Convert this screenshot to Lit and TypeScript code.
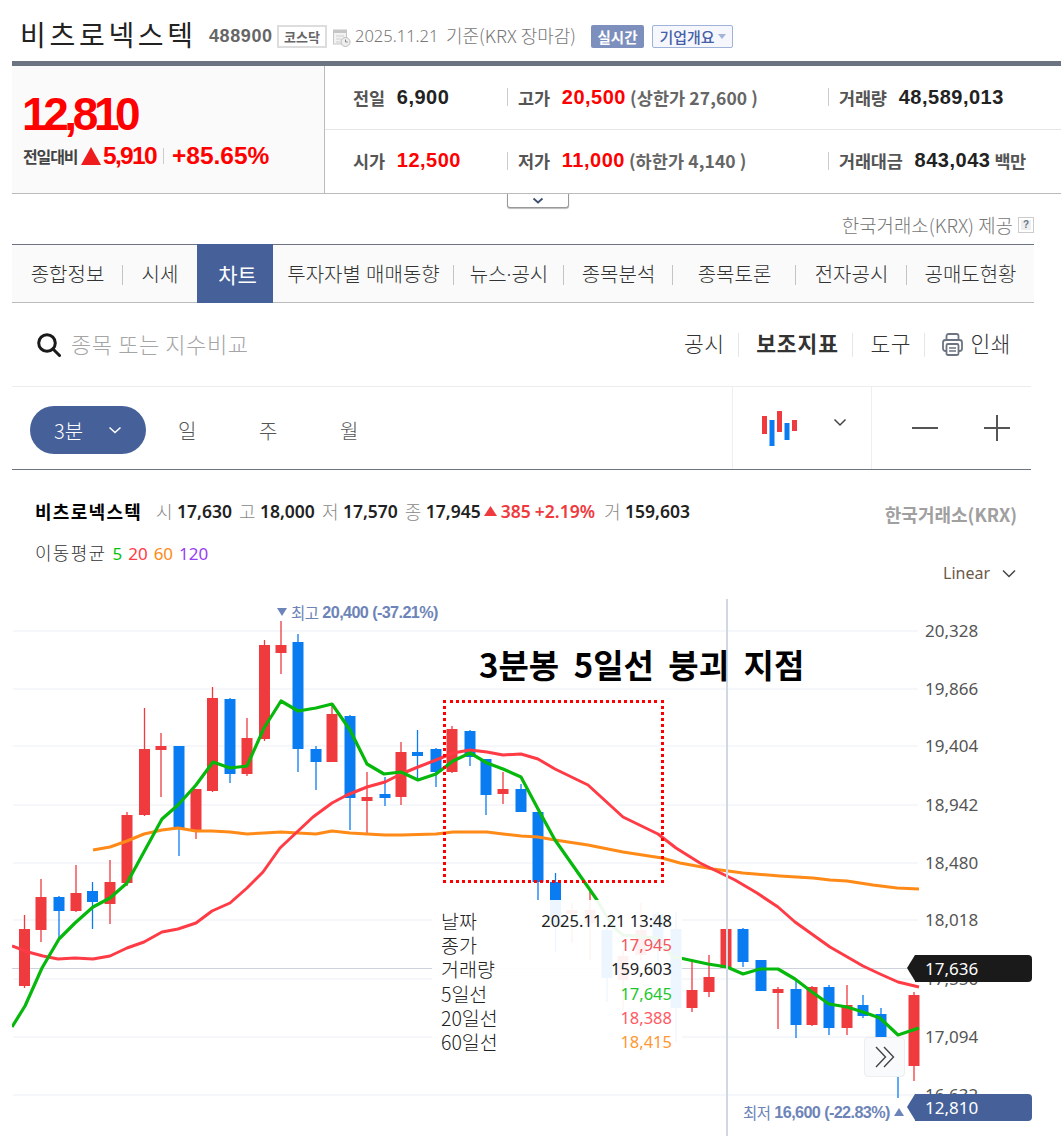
import { LitElement, html, css, svg } from "lit";
import { customElement } from "lit/decorators.js";

type C = [number, number, number, number, number, "r" | "b"];
const candles: C[] = [
  [24.5, 915, 988, 929, 986, "r"], [41, 879, 942, 897, 930, "r"], [59, 896, 940, 897, 911, "b"],
  [76, 865, 912, 893, 911, "r"], [92.5, 882, 929, 891, 902, "b"], [110, 860, 924, 882, 904, "r"],
  [127, 812, 886, 815, 883, "r"], [144.5, 708, 816, 749, 815, "r"], [161, 733, 797, 746, 750, "r"],
  [179, 746, 856, 746, 828, "b"], [196, 789, 839, 789, 830, "r"], [212.5, 687, 792, 698, 791, "r"],
  [230, 698, 783, 699, 774, "b"], [247, 718, 776, 738, 774, "r"], [264.5, 640, 741, 645, 739, "r"],
  [281, 621, 674, 645, 653, "r"], [298, 634, 772, 642, 749, "b"], [316, 746, 790, 749, 762, "b"],
  [332, 703, 762, 714, 762, "r"], [350, 715, 830, 716, 798, "b"], [367, 772, 833, 797, 801, "r"],
  [385, 777, 806, 794, 798, "b"], [401, 742, 805, 752, 797, "r"], [417.5, 730, 778, 752, 756, "b"],
  [436, 748, 787, 749, 772, "b"], [452, 726, 773, 729, 772, "r"], [470, 730, 766, 731, 757, "b"],
  [486, 759, 815, 759, 795, "b"], [503, 772, 804, 789, 794, "r"], [521, 784, 812, 789, 812, "b"],
  [538, 812, 900, 812, 882, "b"], [555.5, 873, 952, 882, 925, "b"], [572, 903, 943, 910, 914, "r"],
  [590, 890, 960, 910, 923, "r"], [607, 925, 1002, 930, 978, "b"], [623, 950, 1010, 956, 980, "r"],
  [641, 903, 960, 930, 955, "r"], [658, 912, 970, 914, 945, "b"], [676, 912, 1042, 929, 1008, "b"],
  [692, 962, 1012, 990, 1008, "r"], [709, 955, 997, 977, 992, "r"], [726, 929, 968, 929, 968, "r"],
  [743, 928, 967, 929, 962, "b"], [761, 960, 991, 960, 991, "b"], [778, 987, 1029, 989, 993, "r"],
  [796, 980, 1038, 989, 1025, "b"], [812, 986, 1026, 987, 1025, "r"], [829, 985, 1035, 987, 1028, "b"],
  [847, 985, 1035, 1005, 1028, "r"], [863, 995, 1018, 1005, 1016, "b"], [881, 1008, 1045, 1014, 1037, "b"],
  [898, 1040, 1098, 1040, 1076, "b"], [914, 992, 1081, 995, 1066, "r"],
];
const green = "12,1027 25,1006 42,968 59,939 75,923 93,907 110,898 127,883 145,850 162,819 178,805 196,785 213,762 230,768 247,766 264,728 281,701 298,711 316,708 332,704 350,730 367,764 384,774 401,772 418,780 436,774 453,761 470,753 487,763 503,769 521,777 538,809 555,840 588,887 597,900 613,927 623,935 657,938 673,957 680,958 708,964 727,967 743,974 760,969 778,969 795,979 812,992 829,1004 847,1007 863,1012 880,1018 898,1035 919,1028";
const red = "12,946 28,952 43,956 58,959 75,958 93,959 110,956 127,948 144,942 162,932 178,929 196,923 212,911 230,903 247,888 263,872 280,848 297,832 313,817 332,803 347,795 367,787 385,782 401,774 418,767 436,760 453,753 470,750 487,752 503,755 521,754 538,759 555,769 588,785 623,817 658,834 676,848 700,863 735,880 757,893 778,907 795,922 830,947 863,966 880,974 898,982 919,987";
const orange = "93,850 110,847 127,841 144,834 162,830 178,828 196,831 212,831 230,832 247,834 264,833 281,832 298,833 316,834 332,831 350,833 367,834 385,835 401,835 436,834 453,832 470,832 487,832 503,834 521,836 538,837 555,840 588,845 623,852 662,858 680,863 713,869 743,873 780,876 813,878 830,880 847,881 873,885 897,888 919,889";
const axis: [string, number][] = [["20,328", 631], ["19,866", 689], ["19,404", 746], ["18,942", 805], ["18,480", 863], ["18,018", 920], ["17,556", 979], ["17,094", 1037], ["16,632", 1095]];
const tabs = ["종합정보", "시세", "차트", "투자자별 매매동향", "뉴스·공시", "종목분석", "종목토론", "전자공시", "공매도현황"];
const tipRows: [string, string, string][] = [
  ["날짜", "2025.11.21 13:48", "t0"], ["종가", "17,945", "t1"], ["거래량", "159,603", "t0"],
  ["5일선", "17,645", "t2"], ["20일선", "18,388", "t3"], ["60일선", "18,415", "t4"],
];

@customElement("app-root")
export class AppRoot extends LitElement {
  static styles = css`
    :host { display: block; width: 1061px; height: 1136px; overflow: hidden; position: relative; background: #fff;
      font-family: "Noto Sans", "Noto Sans CJK KR", sans-serif; color: #333; }
    * { box-sizing: border-box; }

    .head { height: 61px; margin-left: 12px; padding: 12px 0 0 8px; display: flex; align-items: center; }
    .title { font-family: "Noto Sans CJK KR", sans-serif; font-size: 28px; letter-spacing: 3.7px; color: #222; width: 189px; white-space: nowrap; margin-top: -6px; }
    .code { font: bold 18px "Liberation Sans", sans-serif; letter-spacing: .6px; color: #666; width: 68px; }
    .badge { height: 23px; display: flex; align-items: center; justify-content: center; font: bold 13px "Noto Sans CJK KR", sans-serif; }
    .kosdaq { width: 50px; border: 2px solid #ddd; color: #666; margin-right: 6px; }
    .cal { width: 18px; height: 18px; margin: 2px 4px 0 0; }
    .date { font: 300 16.5px "Noto Sans", sans-serif; color: #777; width: 91px; white-space: nowrap; margin-top: -3px; }
    .base { font: 300 18px "Noto Sans CJK KR", sans-serif; color: #777; width: 145px; white-space: nowrap; margin-top: -3px; }
    .real { width: 53px; background: #7d8fbd; color: #fff; border-radius: 2px; margin-right: 8px; font-size: 14.5px; }
    .corp { width: 81px; border: 1px solid #9fb2d8; background: #f5f7fd; color: #4560a8; gap: 3px; border-radius: 2px; font-size: 15px; font-weight: 500; }
    .corp i { width: 0; height: 0; border: 4px solid transparent; border-top: 5px solid #a4b4d4; border-bottom: 0; }

    .bar { height: 5px; margin-left: 12px; background: #6b7480; }
    .summary { height: 128px; margin-left: 12px; display: flex; border-bottom: 1px solid #bbb; }
    .now { width: 313px; background: #fafafa; border-right: 1px solid #bbb; padding: 22px 0 0 10px; }
    .big { font: bold 46px/52px "Liberation Sans", sans-serif; letter-spacing: -4.4px; color: #f00; }
    .diff { display: flex; align-items: center; height: 26px; margin-top: 3px; color: #f00; font: bold 24.5px "Liberation Sans", sans-serif; }
    .diff .lab { font: bold 16px "Noto Sans CJK KR", sans-serif; letter-spacing: -1.1px; color: #444; width: 58px; margin-left: 1px; white-space: nowrap; }
    .diff .up { width: 0; height: 0; border: 10px solid transparent; border-top: 0; border-bottom: 18px solid #ee1c1c; margin-right: 2px; }
    .diff .amt { letter-spacing: -1.7px; width: 60px; }
    .diff .sep { width: 1px; height: 16px; background: #ccc; margin-right: 8px; }
    .cells { flex: 1; display: flex; flex-direction: column; padding-bottom: 1px; }
    .row { flex: 1; display: grid; grid-template-columns: 154px 321px 1fr; align-items: center; padding-left: 28px; }
    .row + .row { border-top: 1px solid #e6e6e6; }
    .cell { display: flex; align-items: center; white-space: nowrap; height: 100%; }
    .cell + .cell { position: relative; padding-left: 11px; }
    .cell + .cell::before { content: ""; position: absolute; left: 0; top: 50%; margin-top: -9px; width: 1px; height: 18px; background: #ccc; }
    .lb { font: bold 17.5px "Noto Sans CJK KR", sans-serif; color: #555; letter-spacing: -.2px; margin-right: 12px; }
    .val { font: bold 20px "Liberation Sans", sans-serif; letter-spacing: .5px; color: #222; }
    .val.red { color: #f00; }
    .lim { font: bold 17.5px "Noto Sans CJK KR", sans-serif; color: #666; margin-left: 4px; letter-spacing: .1px; }
    .unit { font: bold 17.5px "Noto Sans CJK KR", sans-serif; color: #555; margin-left: 4px; letter-spacing: -.5px; }
    .fold { position: absolute; left: 507px; top: 194px; width: 62px; height: 14px; background: #fff; border: 1px solid #999; border-top: 0; border-radius: 0 0 3px 3px; box-shadow: 0 1px 1px #bbb; display: flex; justify-content: center; align-items: center; }

    .prov { height: 50px; margin-left: 12px; width: 1022px; display: flex; justify-content: flex-end; align-items: flex-end; padding-bottom: 6px; gap: 5px; font: 300 18.9px "Noto Sans CJK KR", sans-serif; color: #777; }
    .q { width: 16px; height: 16px; margin-bottom: 5px; background: #eee; border: 1px solid #ccc; outline: 2px solid #fff; outline-offset: -3px; color: #678; font: bold 10px/14px "Liberation Sans", sans-serif; text-align: center; }

    .tabs { margin-left: 12px; width: 1022px; height: 59px; display: grid; grid-template-columns: 111px 74px 76px 181px 110px 109px 123px 111px 127px; background: #fafafa; border-top: 1px solid #6b7480; border-bottom: 1px solid #bbb; font: 300 20px "Noto Sans", "Noto Sans CJK KR", sans-serif; color: #333; }
    .tab { display: flex; align-items: center; justify-content: center; position: relative; white-space: nowrap; }
    .tab.sep::after { content: ""; position: absolute; right: 0; top: 20px; height: 20px; width: 1px; background: #c4c4c4; }
    .tab.on { background: #466199; color: #fff; font-weight: 400; font-size: 21px; margin: -1px 0 -1px; padding-left: 5px; }

    .tools { margin-left: 12px; width: 1019px; height: 84px; display: flex; align-items: center; border-bottom: 1px solid #ececec; padding-left: 25px; }
    .ph { margin: -4px 0 0 10px; font: 300 22px "Noto Sans CJK KR", sans-serif; color: #a5a5a5; letter-spacing: .6px; flex: 1; white-space: nowrap; }
    .act { font: 300 21.5px "Noto Sans CJK KR", sans-serif; letter-spacing: .5px; color: #333; display: flex; align-items: center; height: 24px; padding-bottom: 4px; white-space: nowrap; }
    .act b { font-weight: 700; font-size: 21.5px; letter-spacing: .9px; }
    .act + .act { border-left: 1px solid #e6e6e6; margin-left: 13.5px; padding-left: 17px; }
    .act svg { margin: 4px 7px 0 0; }
    .tools .end { width: 20px; flex: none; }

    .period { margin-left: 12px; width: 1019px; height: 83px; display: flex; border-bottom: 1px solid #6b7480; }
    .pleft { flex: 1; display: flex; align-items: center; padding: 4px 0 0 18px; font: 300 20px "Noto Sans CJK KR", sans-serif; color: #555; }
    .pill { width: 116px; height: 48px; border-radius: 24px; background: #466199; color: #fff; display: flex; align-items: center; padding-left: 24px; gap: 25px; margin-right: 32px; }
    .per { width: 81px; }
    .ctype { width: 140px; border-left: 1px solid #edf0f3; border-right: 1px solid #edf0f3; display: flex; align-items: center; padding-left: 29px; gap: 35px; }
    .zoom { width: 159px; display: flex; align-items: center; gap: 46px; padding: 0 0 0 40px; }

    .legend { margin-left: 12px; height: 120px; position: relative; }
    .info { display: flex; align-items: center; height: 22px; position: absolute; left: 23px; top: 30px; white-space: nowrap; font: 17px "Noto Sans", sans-serif; }
    .info .nm { font: 700 18px "Noto Sans CJK KR", sans-serif; letter-spacing: 1.3px; color: #000; width: 121px; }
    .info span.k { font: 300 18px "Noto Sans CJK KR", sans-serif; color: #888; width: 21px; }
    .info b { font-weight: 600; font-size: 17.5px; color: #222; margin-right: 7px; }
    .info .hot { color: #ef3a3e; font-weight: 600; font-size: 17.5px; }
    .krx { position: absolute; right: 44px; top: 31px; font: bold 18px "Noto Sans CJK KR", sans-serif; color: #a0a0a0; white-space: nowrap; }
    .ma { position: absolute; left: 23px; top: 69px; font: 300 18px "Noto Sans CJK KR", sans-serif; letter-spacing: 1.3px; display: flex; gap: 6px; color: #333; align-items: baseline; }
    .ma i { font: 400 17px "Noto Sans", sans-serif; letter-spacing: 0; }
    .linear { position: absolute; left: 931px; top: 92px; font-size: 16px; color: #6b5a4a; display: flex; align-items: center; gap: 12px; }

    .chart { margin-left: 12px; position: relative; width: 1049px; height: 546px; overflow: hidden; }
    .chart > svg { display: block; }
    .box { position: absolute; left: 431px; top: 110px; width: 221px; height: 183px; border: 3px dotted #f00; }
    .note { position: absolute; left: 467px; top: 50px; font: 700 33px "Noto Sans CJK KR", sans-serif; color: #000; word-spacing: 7px; white-space: nowrap; }
    .mark { position: absolute; font: 15.5px "Noto Sans CJK KR", sans-serif; color: #6d84b8; white-space: nowrap; letter-spacing: -.6px; display: flex; align-items: center; gap: 4px; }
    .mark b { font: bold 16.200px "Liberation Sans", sans-serif; }
    .mark i { width: 0; height: 0; border: 5px solid transparent; }
    .mark i.dn { border-top: 8px solid #6d84b8; border-bottom: 0; }
    .mark i.up { border-bottom: 8px solid #6d84b8; border-top: 0; }
    .hi { left: 265px; top: 11px; }
    .lo { left: 731px; top: 511px; }
    .tip { position: absolute; left: 420px; top: 310px; width: 250px; height: 152px; background: rgba(255,255,255,.93); padding: 9px 10px 0 9px; font-size: 16.500px; line-height: 24.2px; color: #222; }
    .tip div { display: flex; justify-content: space-between; white-space: pre; height: 24.2px; }
    .tip .l { font: 300 19.500px/24.2px "Noto Sans CJK KR", "Noto Sans", sans-serif; }
    .t0 { color: #222; } .t1 { color: #f4555d; } .t2 { color: #1fc62f; } .t3 { color: #ff5a64; } .t4 { color: #ff9933; }
    .tag { position: absolute; left: 903px; width: 117px; height: 27px; border-radius: 0 4px 4px 0; color: #fff; font-size: 17px; line-height: 27px; padding-left: 10px; }
    .tag::before { content: ""; position: absolute; left: -8px; top: 0; border: 13.5px solid transparent; border-left: 0; border-right: 8px solid; }
    .tag.k { top: 365px; background: #1a1a1a; }
    .tag.k::before { border-right-color: #1a1a1a; }
    .tag.n { top: 504px; background: #466199; }
    .tag.n::before { border-right-color: #466199; }
    .more { position: absolute; left: 852px; top: 447px; width: 41px; height: 40px; background: #f9fafb; border: 1px solid #eceef1; border-radius: 4px; display: flex; align-items: center; justify-content: center; }
    .ax { font: 17px "Noto Sans", sans-serif; fill: #555; }
  `;

  private chartSvg() {
    return html`<svg width="1049" height="546" viewBox="12 590 1049 546" xmlns="http://www.w3.org/2000/svg">
      ${axis.map(([, y]) => svg`<line x1="13" x2="918" y1=${y} y2=${y} stroke="#f3f5f8" stroke-width="1.5"/>`)}
      <line x1="12" x2="907" y1="968.5" y2="968.5" stroke="#ccd3dd" stroke-width="1"/>
      ${axis.map(([t, y]) => svg`<text class="ax" x="925" y=${y + 6}>${t}</text>`)}
      ${candles.map(([x, t, b, bt, bb, c]) => {
        const col = c === "r" ? "#ef3a3e" : "#0a7cf2";
        return svg`<line x1=${x} x2=${x} y1=${t} y2=${b} stroke=${col} stroke-width="1.3"/>
          <rect x=${x - 5.5} y=${bt} width="11" height=${Math.max(bb - bt, 3)} fill=${col}/>`;
      })}
      <polyline points=${orange} fill="none" stroke="#ff8a17" stroke-width="3" stroke-linejoin="round"/>
      <polyline points=${red} fill="none" stroke="#ff3b46" stroke-width="3" stroke-linejoin="round"/>
      <polyline points=${green} fill="none" stroke="#06b80c" stroke-width="3.200" stroke-linejoin="round"/>
      <line x1="727" x2="727" y1="599" y2="1136" stroke="#cfd7e3" stroke-width="2"/>
    </svg>`;
  }

  render() {
    return html`
      <div class="head">
        <div class="title">비츠로넥스텍</div>
        <div class="code">488900</div>
        <div class="badge kosdaq">코스닥</div>
        <svg class="cal" viewBox="0 0 18 18"><rect x=".5" y="1" width="13" height="14" fill="#f2f2f2" stroke="#c6c6c6"/><rect x=".5" y="1" width="13" height="3" fill="#c6c6c6"/><path d="M3 7h8M3 10h5M3 13h4" stroke="#cfcfcf"/><circle cx="12.5" cy="13" r="4.5" fill="#eee" stroke="#bbb"/><path d="M12.5 10.5V13h2.2" fill="none" stroke="#888"/></svg>
        <div class="date">2025.11.21</div>
        <div class="base">기준(KRX 장마감)</div>
        <div class="badge real">실시간</div>
        <div class="badge corp">기업개요<i></i></div>
      </div>
      <div class="bar"></div>
      <div class="summary">
        <div class="now">
          <div class="big">12,810</div>
          <div class="diff">
            <span class="lab">전일대비</span><span class="up"></span><span class="amt">5,910</span><span class="sep"></span><span>+85.65%</span>
          </div>
        </div>
        <div class="cells">
          <div class="row">
            <div class="cell"><span class="lb">전일</span><span class="val">6,900</span></div>
            <div class="cell"><span class="lb">고가</span><span class="val red">20,500</span><span class="lim">(상한가 27,600 )</span></div>
            <div class="cell"><span class="lb">거래량</span><span class="val">48,589,013</span></div>
          </div>
          <div class="row">
            <div class="cell"><span class="lb">시가</span><span class="val red">12,500</span></div>
            <div class="cell"><span class="lb">저가</span><span class="val red">11,000</span><span class="lim">(하한가 4,140 )</span></div>
            <div class="cell"><span class="lb">거래대금</span><span class="val">843,043</span><span class="unit">백만</span></div>
          </div>
        </div>
      </div>
      <div class="fold"><svg width="12" height="7" viewBox="0 0 12 7"><path d="M1.5 1.5 6 5.5l4.500-4" fill="none" stroke="#3d4f70" stroke-width="1.8"/></svg></div>
      <div class="prov"><span>한국거래소(KRX) 제공</span><span class="q">?</span></div>
      <div class="tabs">
        ${tabs.map((t, i) => html`<div class="tab ${i === 2 ? "on" : ""} ${i !== 1 && i !== 2 && i !== 8 ? "sep" : ""}">${t}</div>`)}
      </div>
      <div class="tools">
        <svg width="24" height="24" viewBox="0 0 24 24"><circle cx="10" cy="10" r="8.300" fill="none" stroke="#1a1a1a" stroke-width="3"/><path d="M16 16l6.500 6.500" stroke="#1a1a1a" stroke-width="3" stroke-linecap="round"/></svg>
        <div class="ph">종목 또는 지수비교</div>
        <div class="act">공시</div>
        <div class="act"><b>보조지표</b></div>
        <div class="act">도구</div>
        <div class="act"><svg width="21" height="23" viewBox="0 0 21 23"><path d="M4.500 7V3a2 2 0 0 1 2-2h8a2 2 0 0 1 2 2v4" fill="none" stroke="#6b7480" stroke-width="1.800"/><rect x="1" y="7" width="19" height="11" rx="2.500" fill="none" stroke="#6b7480" stroke-width="1.800"/><rect x="4.500" y="11" width="12" height="11" rx="1.500" fill="#fff" stroke="#6b7480" stroke-width="1.800"/><path d="M7 15h7M7 18h7" stroke="#6b7480" stroke-width="1.500"/></svg>인쇄</div>
        <div class="end"></div>
      </div>
      <div class="period">
        <div class="pleft">
          <div class="pill">3분<svg width="14" height="8" viewBox="0 0 14 8"><path d="M1.500 1.500 7 6.500l5.500-5" fill="none" stroke="#fff" stroke-width="1.500"/></svg></div>
          <span class="per">일</span><span class="per">주</span><span class="per">월</span>
        </div>
        <div class="ctype">
          <svg width="36" height="35" viewBox="0 0 36 35"><rect x="0" y="5" width="5" height="18" fill="#ef3a3e"/><rect x="7.500" y="9" width="5" height="26" fill="#0a7cf2"/><rect x="15" y="0" width="5" height="21" fill="#ef3a3e"/><rect x="22.500" y="12" width="5" height="17" fill="#0a7cf2"/><rect x="30" y="9" width="5" height="11" fill="#ef3a3e"/></svg>
          <svg width="14" height="9" viewBox="0 0 14 9" style="margin-top:-12px"><path d="M1.500 1.500 7 7l5.500-5.500" fill="none" stroke="#444" stroke-width="1.500"/></svg>
        </div>
        <div class="zoom">
          <svg width="26" height="26" viewBox="0 0 26 26"><path d="M0 13h26" stroke="#555" stroke-width="2"/></svg>
          <svg width="26" height="26" viewBox="0 0 26 26"><path d="M0 13h26M13 0v26" stroke="#555" stroke-width="2"/></svg>
        </div>
      </div>
      <div class="legend">
        <div class="info">
          <span class="nm">비츠로넥스텍</span>
          <span class="k">시</span><b>17,630</b><span class="k">고</span><b>18,000</b><span class="k">저</span><b>17,570</b><span class="k">종</span><b style="margin-right:3px">17,945</b>
          <svg width="13" height="10" viewBox="0 0 13 10" style="margin-right:4px"><path d="M6.500 0 13 10H0z" fill="#ef3a3e"/></svg>
          <span class="hot" style="margin-right:4px">385</span><span class="hot" style="margin-right:9px">+2.19%</span>
          <span class="k">거</span><b>159,603</b>
        </div>
        <div class="krx">한국거래소(KRX)</div>
        <div class="ma"><span>이동평균</span><i style="color:#06c40c;font-style:normal">5</i><i style="color:#ff3b46;font-style:normal">20</i><i style="color:#ff8a17;font-style:normal">60</i><i style="color:#9a3df5;font-style:normal">120</i></div>
        <div class="linear">Linear<svg width="14" height="9" viewBox="0 0 14 9"><path d="M1 1.500 7 7.500l6-6" fill="none" stroke="#444" stroke-width="1.500"/></svg></div>
      </div>
      <div class="chart">
        ${this.chartSvg()}
        <div class="box"></div>
        <div class="note">3분봉 5일선 붕괴 지점</div>
        <div class="mark hi"><i class="dn"></i><span>최고</span><b>20,400 (-37.21%)</b></div>
        <div class="mark lo"><span>최저</span><b>16,600 (-22.83%)</b><i class="up"></i></div>
        <div class="tip">
          ${tipRows.map(([a, b, c]) => html`<div><span class="l">${a}</span><span class=${c}>${b}</span></div>`)}
        </div>
        <div class="more"><svg width="22" height="22" viewBox="0 0 22 22"><path d="M2 1l9.500 10L2 21M10 1l9.500 10L10 21" fill="none" stroke="#444" stroke-width="1.400"/></svg></div>
        <div class="tag k">17,636</div>
        <div class="tag n">12,810</div>
      </div>
    `;
  }
}
